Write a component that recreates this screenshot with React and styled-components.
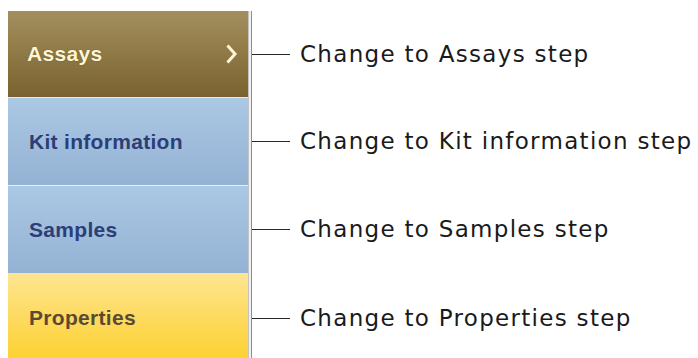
import React from "react";
import styled, { createGlobalStyle } from "styled-components";

const Global = createGlobalStyle`
  html, body { margin: 0; padding: 0; background: #fff; }
  body { width: 698px; height: 358px; overflow: hidden; }
`;

const Page = styled.div`
  padding: 11px 0 0 8px;
  display: flex;
  flex-direction: column;
`;

const Row = styled.div`
  display: flex;
  height: ${(p) => p.$h}px;
`;

const themes = {
  brown: { bg: "linear-gradient(#a38f5d, #7a6230)", color: "#fff6d6", shadow: "0 0 1px rgba(80,60,20,0.9)" },
  blue: { bg: "linear-gradient(#abc8e4, #94b2d3)", color: "#2c3e78", shadow: "none" },
  yellow: { bg: "linear-gradient(#fde591, #fdd02c)", color: "#5b4a32", shadow: "none" },
};

const Tab = styled.div`
  width: 240px;
  box-sizing: border-box;
  display: flex;
  align-items: center;
  justify-content: space-between;
  padding: 0 10px 0 ${(p) => (p.$variant === "brown" ? 19 : 21)}px;
  background: ${(p) => themes[p.$variant].bg};
  border-top: ${(p) => (p.$sep ? "1px solid #e4edf5" : "none")};
  font-family: "Liberation Sans", Arial, sans-serif;
  font-weight: bold;
  font-size: 21px;
  letter-spacing: 0.3px;
  color: ${(p) => themes[p.$variant].color};
  text-shadow: ${(p) => themes[p.$variant].shadow};
`;

const Chevron = styled.svg`
  width: 13px;
  height: 22px;
`;

const Rail = styled.div`
  width: 2px;
  border-left: 1px solid #c4c4c4;
  border-right: 1px solid #8e8e8e;
  background: #f0f0f0;
`;

const Note = styled.div`
  display: flex;
  align-items: center;
  flex: 1;
`;

const Connector = styled.div`
  width: 38px;
  height: 1px;
  background: #2a2a2a;
`;

const Label = styled.span`
  margin-left: 10px;
  font-family: "DejaVu Sans", sans-serif;
  font-size: 23px;
  color: #1a1a1a;
  white-space: nowrap;
  letter-spacing: 1.3px;
`;

const items = [
  { name: "Assays", variant: "brown", h: 86, chevron: true, note: "Change to Assays step" },
  { name: "Kit information", variant: "blue", h: 88, sep: true, note: "Change to Kit information step" },
  { name: "Samples", variant: "blue", h: 88, sep: true, note: "Change to Samples step" },
  { name: "Properties", variant: "yellow", h: 90, note: "Change to Properties step" },
];

export default function App() {
  return (
    <>
      <Global />
      <Page>
        {items.map((it) => (
          <Row key={it.name} $h={it.h}>
            <Tab $variant={it.variant} $sep={it.sep}>
              <span>{it.name}</span>
              {it.chevron && (
                <Chevron viewBox="0 0 13 22">
                  <path d="M2.5 2.5 L10 11 L2.5 19.5" fill="none" stroke="#fff6d6" strokeWidth="3" />
                </Chevron>
              )}
            </Tab>
            <Rail />
            <Note>
              <Connector />
              <Label>{it.note}</Label>
            </Note>
          </Row>
        ))}
      </Page>
    </>
  );
}
